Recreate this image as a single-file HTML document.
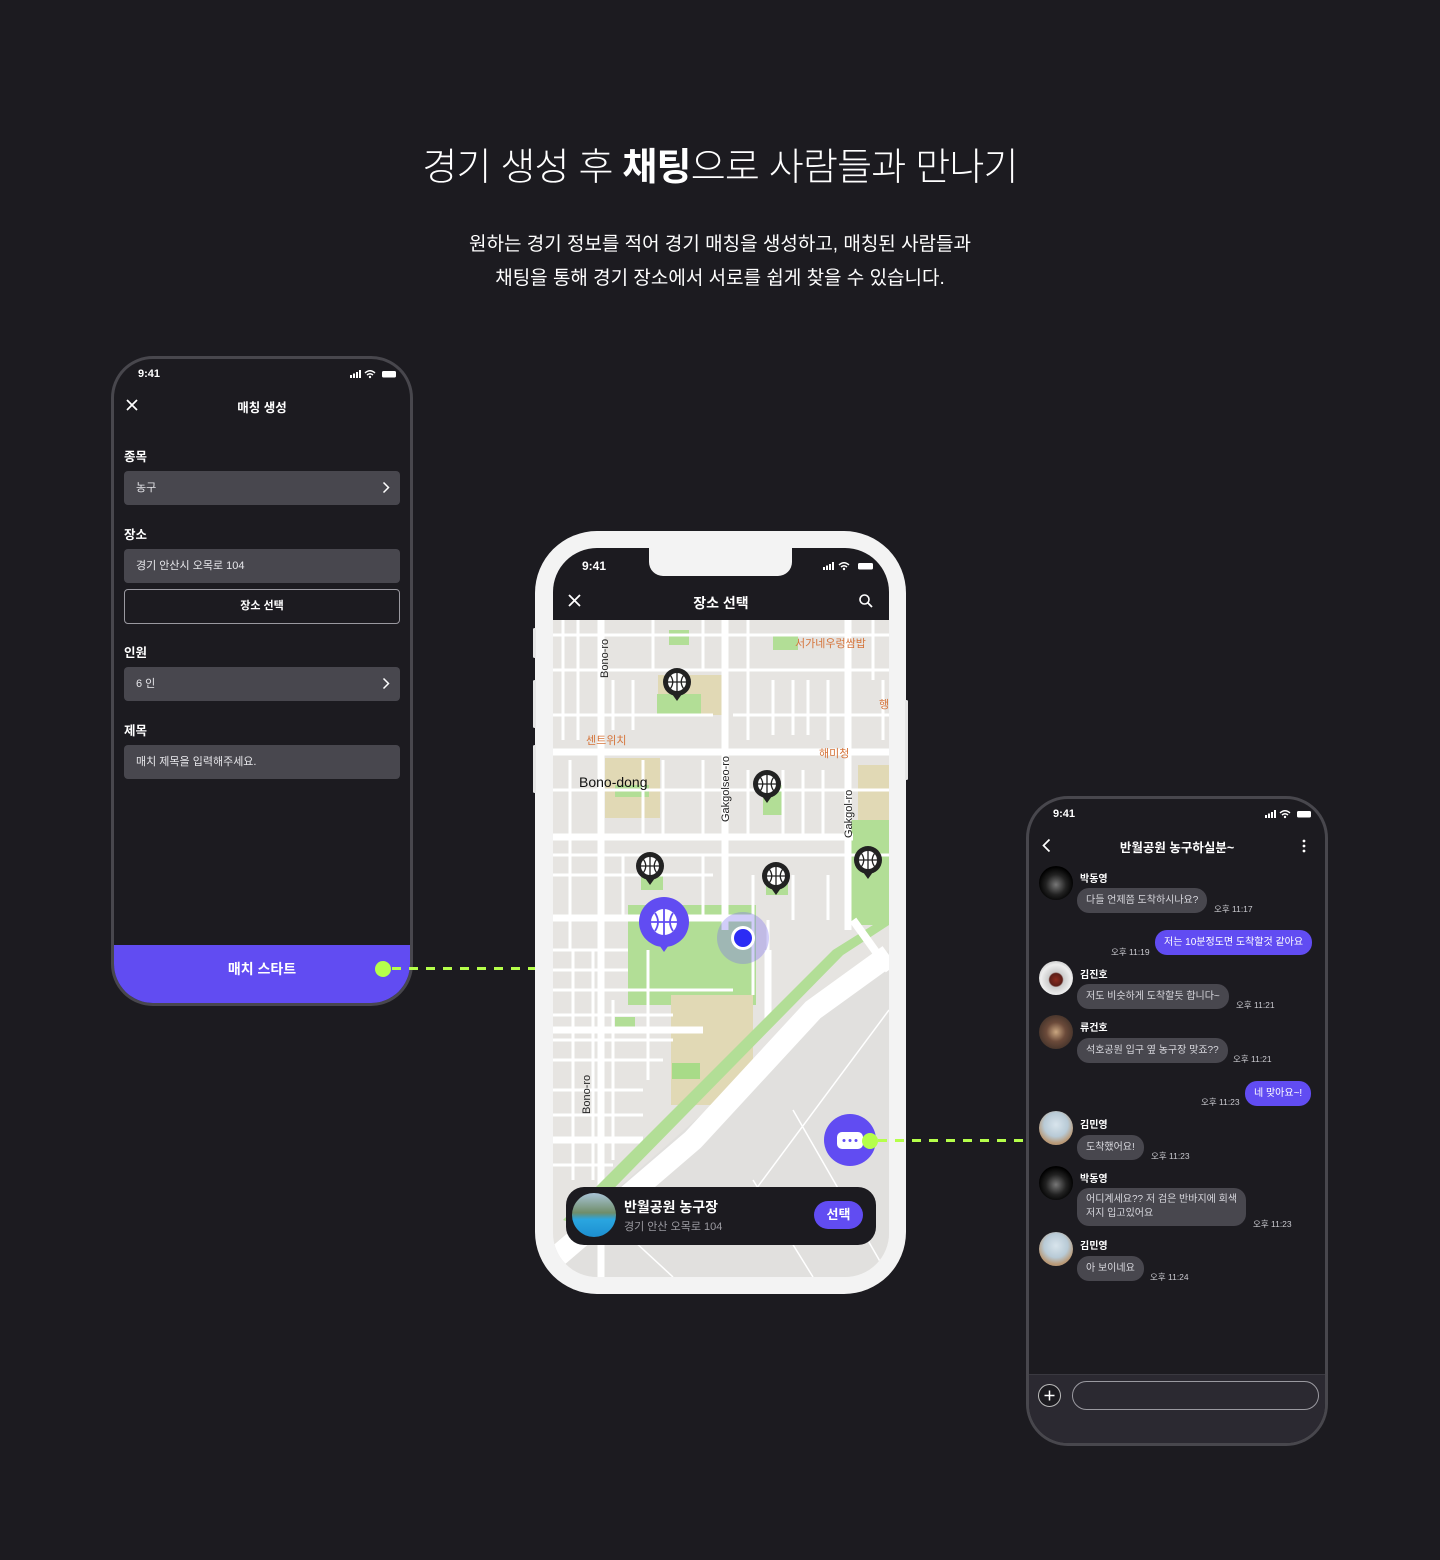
<!DOCTYPE html>
<html><head><meta charset="utf-8"><style>
*{margin:0;padding:0;box-sizing:border-box}
body{width:1440px;height:1560px;background:#1c1b20;position:relative;overflow:hidden;font-family:"Liberation Sans","Noto Sans CJK KR",sans-serif;color:#fff}
.a{position:absolute}
.t{position:absolute;white-space:nowrap}
.fld{position:absolute;left:10px;width:276px;height:34px;background:#48474e;border-radius:4px;font-size:11px;color:#e6e6ea;padding-left:12px;line-height:34px}
.lbl{position:absolute;left:10px;font-size:12.5px;font-weight:bold;color:#fff}
.chev{position:absolute;right:10px;top:10px}
.av{position:absolute;left:10px;width:34px;height:34px;border-radius:50%;overflow:hidden}
.nm{position:absolute;left:51px;font-size:10px;font-weight:bold;color:#fff}
.bb{position:absolute;background:#48474e;border-radius:12px;font-size:10px;color:#d8d8de;padding:0 9px;line-height:25px;white-space:nowrap}
.ob{position:absolute;background:#614cf2;border-radius:12px;font-size:10px;color:#fff;padding:0 9px;line-height:25px;white-space:nowrap}
.tm{position:absolute;font-size:8.5px;color:#c9c9cf;white-space:nowrap}
.dash{position:absolute;height:3px;background:repeating-linear-gradient(90deg,#b5ff4a 0 9px,transparent 9px 17px)}
</style></head><body>

<div class="t" style="left:0;width:1440px;top:136px;text-align:center;font-size:38px;font-weight:300;color:#fff;letter-spacing:-0.8px">경기 생성 후 <b style="font-weight:bold">채팅</b>으로 사람들과 만나기</div>
<div class="t" style="left:0;width:1440px;top:228px;text-align:center;font-size:19px;line-height:34px;color:#fff">원하는 경기 정보를 적어 경기 매칭을 생성하고, 매칭된 사람들과<br>채팅을 통해 경기 장소에서 서로를 쉽게 찾을 수 있습니다.</div>

<!-- left phone -->
<div class="a" style="left:111px;top:356px;width:302px;height:650px;border:3px solid #48474d;border-radius:42px;background:#1c1b20;overflow:hidden">
  <div class="t" style="left:24px;top:9px;font-size:11px;font-weight:bold">9:41</div>
  <svg class="a" style="left:236px;top:10px" width="50" height="10"><rect x="0" y="6" width="2" height="3" fill="#fff"/><rect x="3" y="4.5" width="2" height="4.5" fill="#fff"/><rect x="6" y="3" width="2" height="6" fill="#fff"/><rect x="9" y="1" width="2" height="8" fill="#fff"/><path d="M15 4 Q20 -0.5 25 4 M17 6 Q20 3.5 23 6" stroke="#fff" stroke-width="1.5" fill="none"/><circle cx="20" cy="8" r="1.2" fill="#fff"/><rect x="32" y="2" width="14" height="6.5" rx="1.5" fill="#fff"/></svg>
  <svg class="a" style="left:12px;top:40px" width="12" height="12"><path d="M1 1L11 11M11 1L1 11" stroke="#fff" stroke-width="1.7"/></svg>
  <div class="t" style="left:0;width:296px;text-align:center;top:38px;font-size:12.5px;font-weight:bold">매칭 생성</div>
  <div class="lbl" style="top:87px">종목</div>
  <div class="fld" style="top:112px">농구<svg class="chev" width="8" height="13"><path d="M1.5 1.5L6.5 6.5L1.5 11.5" stroke="#fff" stroke-width="1.5" fill="none"/></svg></div>
  <div class="lbl" style="top:165px">장소</div>
  <div class="fld" style="top:190px">경기 안산시 오목로 104</div>
  <div class="a" style="left:10px;top:230px;width:276px;height:35px;border:1px solid #9a99a0;border-radius:4px;text-align:center;line-height:33px;font-size:11px;font-weight:bold">장소 선택</div>
  <div class="lbl" style="top:283px">인원</div>
  <div class="fld" style="top:308px">6 인<svg class="chev" width="8" height="13"><path d="M1.5 1.5L6.5 6.5L1.5 11.5" stroke="#fff" stroke-width="1.5" fill="none"/></svg></div>
  <div class="lbl" style="top:361px">제목</div>
  <div class="fld" style="top:386px">매치 제목을 입력해주세요.</div>
  <div class="a" style="left:0;top:586px;width:296px;height:64px;background:#614cf2;text-align:center;line-height:48px;font-size:14px;font-weight:bold">매치 스타트</div>
</div>

<div class="dash" style="left:392px;top:967px;width:162px"></div>
<div class="a" style="left:375px;top:961px;width:16px;height:16px;border-radius:50%;background:#b5ff4a"></div>

<!-- middle phone -->
<div class="a" style="left:535px;top:531px;width:371px;height:763px;border-radius:62px;background:#f3f3f3"></div>
<div class="a" style="left:533px;top:628px;width:3px;height:30px;background:#e6e6e6;border-radius:2px"></div>
<div class="a" style="left:533px;top:680px;width:3px;height:48px;background:#e6e6e6;border-radius:2px"></div>
<div class="a" style="left:533px;top:745px;width:3px;height:48px;background:#e6e6e6;border-radius:2px"></div>
<div class="a" style="left:905px;top:700px;width:3px;height:80px;background:#e6e6e6;border-radius:2px"></div>
<div class="a" style="left:553px;top:548px;width:336px;height:729px;border-radius:44px;overflow:hidden;background:#e6e4e1">
  <div class="a" style="left:0;top:0;width:336px;height:72px;background:#1c1b20"></div>
  <div class="a" style="left:96px;top:0;width:143px;height:28px;background:#f3f3f3;border-radius:0 0 14px 14px"></div>
  <div class="t" style="left:29px;top:11px;font-size:12px;font-weight:bold">9:41</div>
  <svg class="a" style="left:270px;top:13px" width="54" height="10"><rect x="0" y="6" width="2" height="3" fill="#fff"/><rect x="3" y="4.5" width="2" height="4.5" fill="#fff"/><rect x="6" y="3" width="2" height="6" fill="#fff"/><rect x="9" y="1" width="2" height="8" fill="#fff"/><path d="M16 4 Q21 -0.5 26 4 M18 6 Q21 3.5 24 6" stroke="#fff" stroke-width="1.5" fill="none"/><circle cx="21" cy="8" r="1.2" fill="#fff"/><rect x="35" y="2" width="15" height="6.5" rx="1.5" fill="#fff"/></svg>
  <svg class="a" style="left:15px;top:46px" width="13" height="13"><path d="M1 1L12 12M12 1L1 12" stroke="#fff" stroke-width="1.8"/></svg>
  <div class="t" style="left:0;width:336px;text-align:center;top:45px;font-size:14px;font-weight:bold">장소 선택</div>
  <svg class="a" style="left:306px;top:46px" width="14" height="14"><circle cx="5.5" cy="5.5" r="4.5" stroke="#fff" stroke-width="1.6" fill="none"/><path d="M9 9L13 13" stroke="#fff" stroke-width="1.8"/></svg>
  <svg class="a" style="left:0;top:72px" width="336" height="657">
    <defs>
      <g id="pin"><path d="M-5 12 L0 19 L5 12Z" fill="#222"/><circle r="14" fill="#222"/><circle r="9" fill="#fff"/><g stroke="#222" stroke-width="1.3" fill="none"><path d="M-9 0H9M0 -9V9"/><path d="M-6.5 -6.5Q-2 0 -6.5 6.5M6.5 -6.5Q2 0 6.5 6.5"/></g></g>
    </defs>
    <rect x="105" y="55" width="65" height="40" fill="#e1d9b5"/>
    <rect x="104" y="74" width="44" height="22" fill="#b2de96"/>
    <rect x="52" y="138" width="55" height="60" fill="#e1d9b5"/>
    <rect x="62" y="165" width="34" height="12" fill="#b2de96"/>
    <rect x="116" y="10" width="20" height="15" fill="#b2de96"/>
    <rect x="220" y="15" width="25" height="15" fill="#b2de96"/>
    <rect x="305" y="145" width="31" height="60" fill="#e1d9b5"/>
    <rect x="298" y="200" width="38" height="105" fill="#b2de96"/>
    <rect x="210" y="165" width="20" height="30" fill="#b2de96"/>
    <rect x="88" y="255" width="22" height="15" fill="#b2de96"/>
    <rect x="213" y="260" width="22" height="15" fill="#b2de96"/>
    <rect x="75" y="285" width="128" height="100" fill="#b2de96"/>
    <rect x="118" y="375" width="82" height="110" fill="#e1d9b5"/>
    <rect x="119" y="443" width="28" height="16" fill="#a8db88"/>
    <rect x="62" y="397" width="20" height="14" fill="#b2de96"/>
    <path d="M0 625 L336 330 L336 657 L0 657Z" fill="#e1e0de"/>
    <g stroke="#fff" stroke-width="3" fill="none">
      <path d="M0 15H336M0 50H336M0 95H160M180 95H336M0 170H336M0 235H336M0 255H160M0 330H75M0 350H75M0 370H180M0 395H120M0 420H120M0 440H110M0 470H90M0 495H90M0 520H80M0 545H60"/>
      <path d="M10 0V120M25 0V120M60 60V110M80 60V110M100 0V50M150 0V50M195 0V120M220 60V115M240 60V115M255 60V115M275 60V120M320 0V60M330 60V120"/>
      <path d="M90 140V220M110 140V220M150 140V220M195 150V215M230 150V215M250 150V215M270 150V215M17 140V330M70 235V300M150 235V300M200 255V300M240 255V300M275 255V300M20 330V560M40 330V560M60 380V540M95 330V460M200 300V375M215 300V380"/>
    </g>
    <g stroke="#fff" stroke-width="7" fill="none">
      <path d="M48 0V657M172 0V310M295 0V310M0 132H336M0 217H300M0 298H200M0 410H150M0 520H90M215 330V400"/>
    </g>
    <path d="M10 600 L280 330 L336 295 L336 305 L290 335 L25 605Z" fill="#b2de96"/>
    <path d="M0 640 L140 520 L260 390 L336 335" stroke="#fff" stroke-width="22" fill="none"/>
    <path d="M300 300 L336 350" stroke="#fff" stroke-width="8" fill="none"/>
    <g stroke="#fff" stroke-width="1.5" fill="none"><path d="M336 390L180 600M200 560L260 657M80 620L120 657M240 490L336 657"/></g>
    <g font-family="Liberation Sans, sans-serif" font-size="11" fill="#222">
      <text transform="translate(55,58) rotate(-90)">Bono-ro</text>
      <text transform="translate(176,202) rotate(-90)">Gakgolseo-ro</text>
      <text transform="translate(299,218) rotate(-90)">Gakgol-ro</text>
      <text transform="translate(37,494) rotate(-90)">Bono-ro</text>
      <text x="26" y="167" font-size="14" fill="#111">Bono-dong</text>
    </g>
    <g font-family="Noto Sans CJK KR, sans-serif" font-size="11" fill="#d5743a">
      <text x="242" y="27">서가네우렁쌈밥</text>
      <text x="33" y="124">센트위치</text>
      <text x="266" y="137">해미청</text>
      <text x="326" y="88">행</text>
    </g>
    <use href="#pin" x="124" y="62"/>
    <use href="#pin" x="214" y="164"/>
    <use href="#pin" x="97" y="246"/>
    <use href="#pin" x="223" y="256"/>
    <use href="#pin" x="315" y="240"/>
    <path d="M104 322 L111 332 L118 322Z" fill="#614cf2"/>
    <circle cx="111" cy="302" r="25" fill="#614cf2"/>
    <circle cx="111" cy="302" r="13" fill="#fff"/>
    <g stroke="#614cf2" stroke-width="1.8" fill="none"><path d="M98 302H124M111 289V315M102 293Q108 302 102 311M120 293Q114 302 120 311"/></g>
    <circle cx="190" cy="318" r="26" fill="#7a70ee" opacity="0.35"/>
    <circle cx="190" cy="318" r="12" fill="#fff"/>
    <circle cx="190" cy="318" r="9" fill="#2c2cf5"/>
    <circle cx="297" cy="520" r="26" fill="#614cf2"/>
    <rect x="284" y="512" width="26" height="17" rx="5" fill="#fff"/>
    <circle cx="291" cy="520.5" r="1.5" fill="#614cf2"/><circle cx="297" cy="520.5" r="1.5" fill="#614cf2"/><circle cx="303" cy="520.5" r="1.5" fill="#614cf2"/>
  </svg>
  <div class="a" style="left:13px;top:639px;width:310px;height:58px;background:#1c1b20;border-radius:18px"></div>
  <div class="a" style="left:19px;top:645px;width:44px;height:44px;border-radius:50%;overflow:hidden;background:linear-gradient(#a9c4d6 0,#6f8d6a 45%,#2aa6e0 60%,#1d8fd0 100%)"></div>
  <div class="t" style="left:71px;top:649px;font-size:14px;font-weight:bold">반월공원 농구장</div>
  <div class="t" style="left:71px;top:670px;font-size:11px;color:#9b9aa1">경기 안산 오목로 104</div>
  <div class="a" style="left:261px;top:653px;width:49px;height:28px;border-radius:14px;background:#614cf2;text-align:center;line-height:28px;font-size:13px;font-weight:bold">선택</div>
</div>

<div class="dash" style="left:878px;top:1139px;width:150px"></div>
<div class="a" style="left:862px;top:1133px;width:16px;height:16px;border-radius:50%;background:#b5ff4a"></div>

<!-- right phone -->
<div class="a" style="left:1026px;top:796px;width:302px;height:650px;border:3px solid #48474d;border-radius:42px;background:#1c1b20;overflow:hidden">
  <div class="t" style="left:24px;top:9px;font-size:11px;font-weight:bold">9:41</div>
  <svg class="a" style="left:236px;top:10px" width="50" height="10"><rect x="0" y="6" width="2" height="3" fill="#fff"/><rect x="3" y="4.5" width="2" height="4.5" fill="#fff"/><rect x="6" y="3" width="2" height="6" fill="#fff"/><rect x="9" y="1" width="2" height="8" fill="#fff"/><path d="M15 4 Q20 -0.5 25 4 M17 6 Q20 3.5 23 6" stroke="#fff" stroke-width="1.5" fill="none"/><circle cx="20" cy="8" r="1.2" fill="#fff"/><rect x="32" y="2" width="14" height="6.5" rx="1.5" fill="#fff"/></svg>
  <svg class="a" style="left:13px;top:39px" width="9" height="15"><path d="M7.5 1.5L1.5 7.5L7.5 13.5" stroke="#fff" stroke-width="1.7" fill="none"/></svg>
  <div class="t" style="left:0;width:296px;text-align:center;top:38px;font-size:12.5px;font-weight:bold">반월공원 농구하실분~</div>
  <svg class="a" style="left:272px;top:40px" width="6" height="14"><circle cx="3" cy="2" r="1.4" fill="#fff"/><circle cx="3" cy="7" r="1.4" fill="#fff"/><circle cx="3" cy="12" r="1.4" fill="#fff"/></svg>

  <div class="av" style="top:67px;background:radial-gradient(circle at 50% 55%,#777 0,#222 40%,#000 70%)"></div>
  <div class="nm" style="top:71px">박동영</div>
  <div class="bb" style="left:48px;top:89px">다들 언제쯤 도착하시나요?</div>
  <div class="tm" style="left:185px;top:104px">오후 11:17</div>

  <div class="ob" style="left:126px;top:131px">저는 10분정도면 도착할것 같아요</div>
  <div class="tm" style="left:82px;top:147px">오후 11:19</div>

  <div class="av" style="top:162px;background:radial-gradient(circle at 50% 55%,#8a2a1e 0,#5b1e18 25%,#ccc 30%,#eee 60%,#999 100%)"></div>
  <div class="nm" style="top:167px">김진호</div>
  <div class="bb" style="left:48px;top:185px">저도 비슷하게 도착할듯 합니다~</div>
  <div class="tm" style="left:207px;top:200px">오후 11:21</div>

  <div class="av" style="top:216px;background:radial-gradient(circle at 50% 50%,#caa680 0,#6b4a3a 40%,#2a2420 100%)"></div>
  <div class="nm" style="top:220px">류건호</div>
  <div class="bb" style="left:48px;top:239px">석호공원 입구 옆 농구장 맞죠??</div>
  <div class="tm" style="left:204px;top:254px">오후 11:21</div>

  <div class="ob" style="left:216px;top:282px">네 맞아요~!</div>
  <div class="tm" style="left:172px;top:297px">오후 11:23</div>

  <div class="av" style="top:312px;background:radial-gradient(circle at 50% 40%,#d8e4ec 0,#b8cad6 45%,#b99a78 70%,#a9866a 100%)"></div>
  <div class="nm" style="top:317px">김민영</div>
  <div class="bb" style="left:48px;top:336px">도착했어요!</div>
  <div class="tm" style="left:122px;top:351px">오후 11:23</div>

  <div class="av" style="top:367px;background:radial-gradient(circle at 50% 55%,#777 0,#222 40%,#000 70%)"></div>
  <div class="nm" style="top:371px">박동영</div>
  <div class="bb" style="left:48px;top:389px;line-height:14px;padding:5px 9px">어디계세요?? 저 검은 반바지에 회색<br>저지 입고있어요</div>
  <div class="tm" style="left:224px;top:419px">오후 11:23</div>

  <div class="av" style="top:433px;background:radial-gradient(circle at 50% 40%,#d8e4ec 0,#b8cad6 45%,#b99a78 70%,#a9866a 100%)"></div>
  <div class="nm" style="top:438px">김민영</div>
  <div class="bb" style="left:48px;top:457px">아 보이네요</div>
  <div class="tm" style="left:121px;top:472px">오후 11:24</div>

  <div class="a" style="left:0;top:575px;width:296px;height:80px;background:#2b2931;border-top:1px solid #3a3940"></div>
  <div class="a" style="left:9px;top:585px;width:23px;height:23px;border-radius:50%;border:1px solid #bbb;background:#1c1b20"></div>
  <svg class="a" style="left:14px;top:590px" width="13" height="13"><path d="M6.5 1.5V11.5M1.5 6.5H11.5" stroke="#fff" stroke-width="1.5"/></svg>
  <div class="a" style="left:43px;top:582px;width:247px;height:29px;border-radius:15px;border:1px solid #9a99a0"></div>
</div>
</body></html>
